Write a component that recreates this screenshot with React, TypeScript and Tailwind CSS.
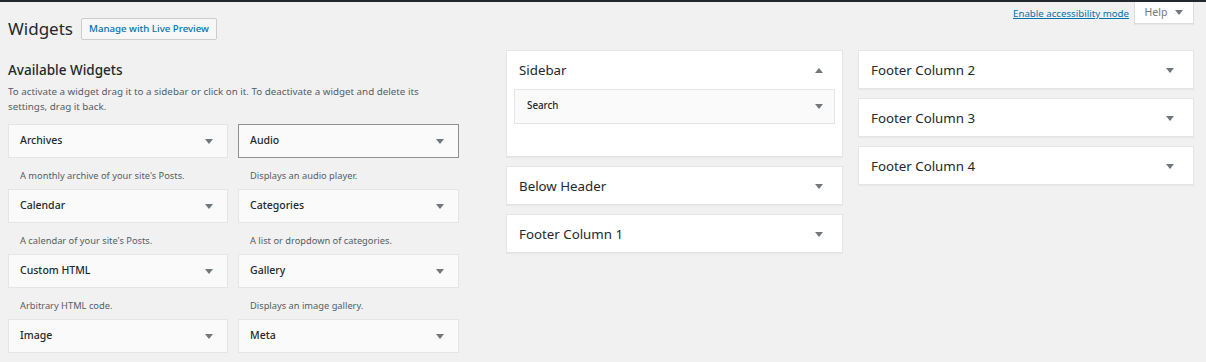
import React from 'react';

const font = { fontFamily: '"Noto Sans", "Open Sans", Arial, sans-serif' };

const widgets = [
    { name: 'Archives', desc: "A monthly archive of your site's Posts." },
    { name: 'Audio', desc: 'Displays an audio player.', focused: true },
    { name: 'Calendar', desc: "A calendar of your site's Posts." },
    { name: 'Categories', desc: 'A list or dropdown of categories.' },
    { name: 'Custom HTML', desc: 'Arbitrary HTML code.' },
    { name: 'Gallery', desc: 'Displays an image gallery.' },
    { name: 'Image', desc: '' },
    { name: 'Meta', desc: '' },
];

const Arrow = ({ up }: { up?: boolean }) => (
    <svg width="8" height="5" viewBox="0 0 8 5" className="shrink-0">
        {up ? <polygon points="0,5 8,5 4,0" fill="#72777c" /> : <polygon points="0,0 8,0 4,5" fill="#72777c" />}
    </svg>
);

const WidgetItem = ({ item }: any) => (
    <div>
        <div
            className={`h-[34px] bg-[#fafafa] border flex items-center justify-between pl-[11px] pr-[14px] ${item.focused ? 'border-[#8c8f94]' : 'border-[#e5e5e5]'}`}
        >
            <span className="text-[10.5px] font-medium text-[#23282d]">{item.name}</span>
            <Arrow />
        </div>
        <div className="h-[31px] pt-[10px] px-[12px] text-[9.3px] leading-[15px] text-[#555d66]">{item.desc}</div>
    </div>
);

const SidebarBox = ({ title, open, children }: any) => (
    <div className="bg-white border border-[#e5e5e5] shadow-[0_1px_1px_rgba(0,0,0,0.04)]">
        <div className="h-[37px] pt-[2px] flex items-center justify-between pl-[12px] pr-[19px]">
            <span className="text-[13.3px] text-[#23282d]">{title}</span>
            <Arrow up={open} />
        </div>
        {children}
    </div>
);

export default function App() {
    return (
        <div style={font} className="min-h-[362px] bg-[#f1f1f1] border-t-2 border-[#23282d] text-[#444]">
            {/* Header row */}
            <div className="flex justify-between items-start">
                <div className="flex items-center pl-[8px] mt-[16px]">
                    <h1 className="text-[17px] leading-[22px] text-[#23282d]">Widgets</h1>
                    <button className="ml-[8px] h-[22px] px-[7px] border border-[#ccc] bg-[#f7f7f7] text-[9.7px] font-medium text-[#0073aa] rounded-[2px]">
                        Manage with Live Preview
                    </button>
                </div>
                <div className="flex items-start mr-[12px]">
                    <a className="mt-[5px] mr-[5px] text-[9.7px] leading-[14px] text-[#0073aa] underline">Enable accessibility mode</a>
                    <div className="h-[22px] w-[60px] bg-white border border-t-0 border-[#ddd] shadow-[0_1px_1px_rgba(0,0,0,0.04)] flex items-center justify-center gap-[8px]">
                        <span className="text-[10.5px] text-[#72777c]">Help</span>
                        <Arrow />
                    </div>
                </div>
            </div>

            {/* Main */}
            <div className="flex items-start mt-[10px]">
                <div className="w-[451px] ml-[8px]">
                    <h2 className="mt-[10px] text-[13.5px] leading-[20px] font-medium text-[#23282d]">Available Widgets</h2>
                    <p className="mt-[4px] text-[9.8px] leading-[15px] text-[#555d66] pr-[20px]">
                        To activate a widget drag it to a sidebar or click on it. To deactivate a widget and delete its settings, drag it back.
                    </p>
                    <div className="mt-[10px] grid grid-cols-[220px_221px] gap-x-[10px]">
                        {widgets.map((w) => (
                            <WidgetItem key={w.name} item={w} />
                        ))}
                    </div>
                </div>

                <div className="w-[337px] ml-[47px] flex flex-col gap-[9px]">
                    <SidebarBox title="Sidebar" open>
                        <div className="mx-[7px] mt-[1px] h-[35px] bg-[#fafafa] border border-[#e5e5e5] flex items-center justify-between pl-[12px] pr-[11px]">
                            <span className="text-[9.8px] font-medium text-[#23282d]">Search</span>
                            <Arrow />
                        </div>
                        <div className="h-[32px]" />
                    </SidebarBox>
                    <SidebarBox title="Below Header" />
                    <SidebarBox title="Footer Column 1" />
                </div>

                <div className="w-[336px] ml-[15px] flex flex-col gap-[9px]">
                    <SidebarBox title="Footer Column 2" />
                    <SidebarBox title="Footer Column 3" />
                    <SidebarBox title="Footer Column 4" />
                </div>
            </div>
        </div>
    );
}
